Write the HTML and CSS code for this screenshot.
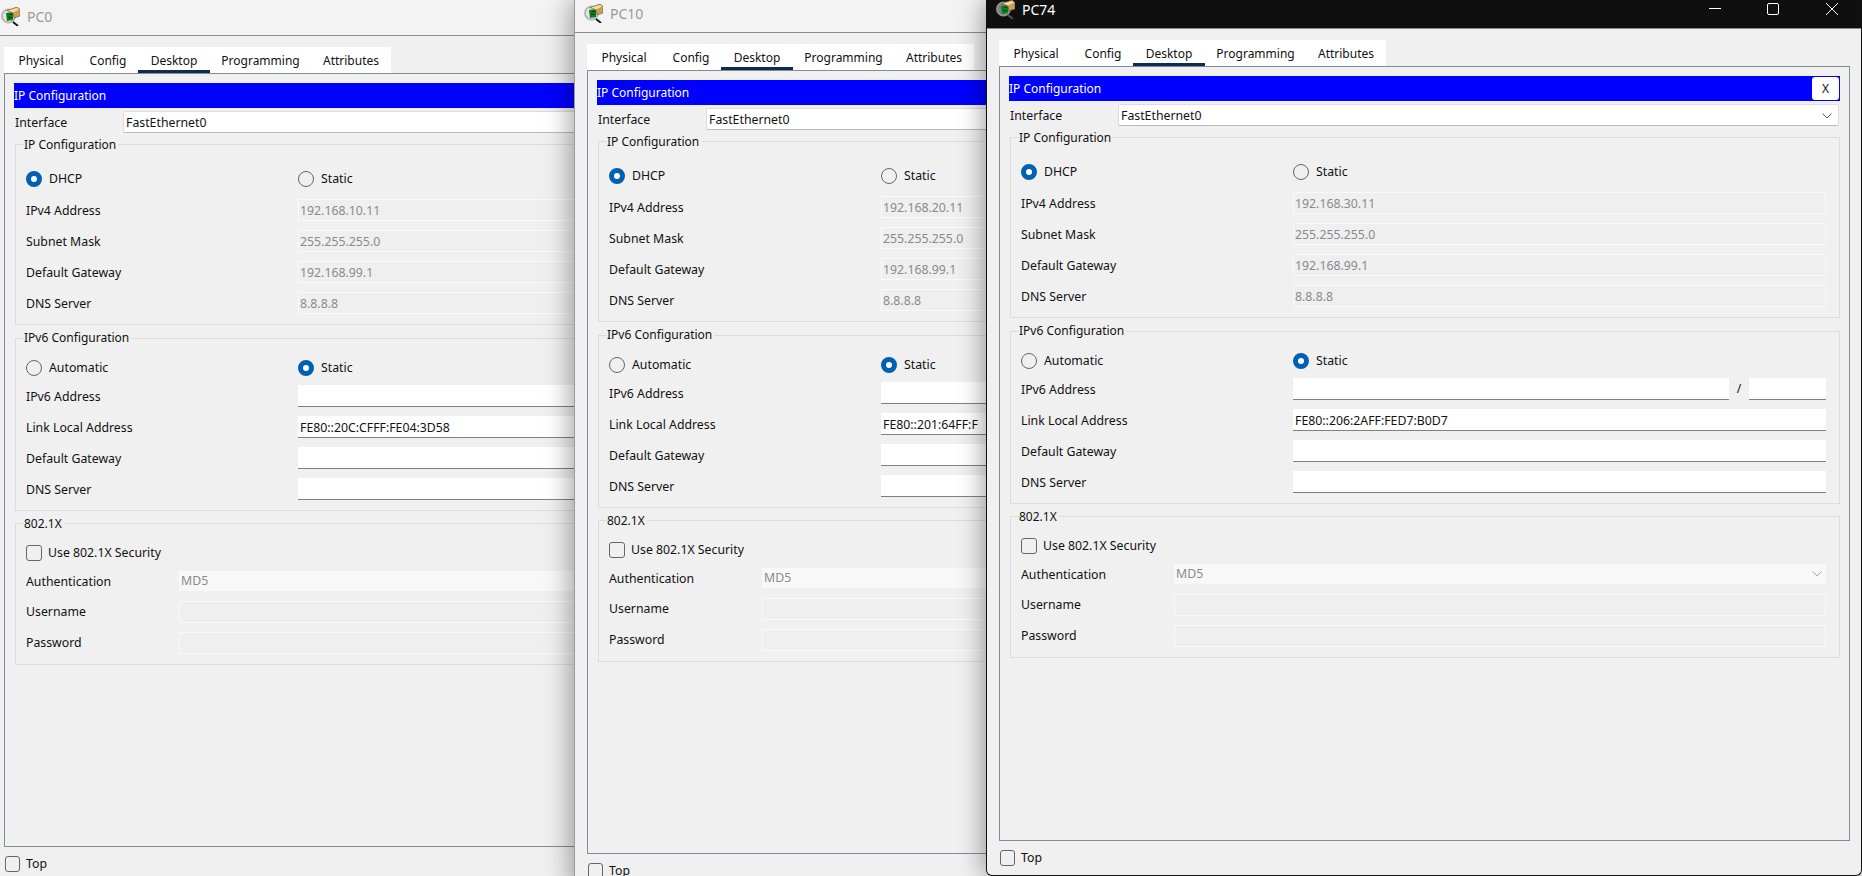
FILE: index.html
```html
<!DOCTYPE html>
<html lang="en">
<head>
  <meta charset="UTF-8">
  <title>PC74</title>
  <link rel="stylesheet" href="styles.css">
</head>
<body>

  <!-- PC0 -->
  <div class="window pc0">
    <div class="titlebar">
      <svg class="app-icon" viewBox="0 0 19 19"><circle cx="7.500" cy="9" r="6.500" fill="#e4e6e4" stroke="#b4b8b4" stroke-width="2"/><path d="M5 6l7-1v8l-6 1z" fill="#0c7d1c"/><path d="M8 7.500h3M7 10.500h4" stroke="#053f0e"/><path d="M12 15l5 4" stroke="#111" stroke-width="1.800"/><path d="M6 3.500L16 0l3 2.500V9l-6 2-1-5z" fill="#c9a052" stroke="#6b5426" stroke-width=".6"/><path d="M7 3.500L16 1l2 1.500-6 3z" fill="#f0dcab"/></svg>
      <span class="title">PC0</span>
    </div>
    <div class="tabs">
      <span class="tab">Physical</span><span class="tab">Config</span><span class="tab active">Desktop</span><span class="tab">Programming</span><span class="tab">Attributes</span>
    </div>
    <div class="panel">
      <div class="bluebar"><span>IP Configuration</span><span class="close-x">X</span></div>
      <div class="iface-row"><span class="iface-label">Interface</span><div class="select">FastEthernet0<svg class="chevron" viewBox="0 0 10 6"><path d="M.5.5L5 5 9.500.5" fill="none" stroke="#555"/></svg></div></div>

      <fieldset class="group">
        <legend>IP Configuration</legend>
        <div class="row radios first"><span class="choice"><i class="radio on"></i>DHCP</span><span class="choice"><i class="radio"></i>Static</span></div>
        <div class="row"><span>IPv4 Address</span><div class="field off">192.168.10.11</div></div>
        <div class="row"><span>Subnet Mask</span><div class="field off">255.255.255.0</div></div>
        <div class="row"><span>Default Gateway</span><div class="field off">192.168.99.1</div></div>
        <div class="row"><span>DNS Server</span><div class="field off">8.8.8.8</div></div>
      </fieldset>

      <fieldset class="group six">
        <legend>IPv6 Configuration</legend>
        <div class="row radios"><span class="choice"><i class="radio"></i>Automatic</span><span class="choice"><i class="radio on"></i>Static</span></div>
        <div class="row"><span>IPv6 Address</span><div class="addr"><div class="field"></div><span class="slash">/</span><div class="field prefix"></div></div></div>
        <div class="row"><span>Link Local Address</span><div class="field">FE80::20C:CFFF:FE04:3D58</div></div>
        <div class="row"><span>Default Gateway</span><div class="field"></div></div>
        <div class="row"><span>DNS Server</span><div class="field"></div></div>
      </fieldset>

      <fieldset class="group dot1x">
        <legend>802.1X</legend>
        <div class="check-row"><i class="check"></i>Use 802.1X Security</div>
        <div class="row wide auth"><span>Authentication</span><div class="field combo">MD5<svg class="chevron" viewBox="0 0 10 6"><path d="M.5.5L5 5 9.500.5" fill="none" stroke="#aaa"/></svg></div></div>
        <div class="row wide"><span>Username</span><div class="field off"></div></div>
        <div class="row wide"><span>Password</span><div class="field off"></div></div>
      </fieldset>
    </div>
    <div class="top-row"><i class="check"></i>Top</div>
  </div>

  <!-- PC10 -->
  <div class="window pc10">
    <div class="titlebar">
      <svg class="app-icon" viewBox="0 0 19 19"><circle cx="7.500" cy="9" r="6.500" fill="#e4e6e4" stroke="#b4b8b4" stroke-width="2"/><path d="M5 6l7-1v8l-6 1z" fill="#0c7d1c"/><path d="M8 7.500h3M7 10.500h4" stroke="#053f0e"/><path d="M12 15l5 4" stroke="#111" stroke-width="1.800"/><path d="M6 3.500L16 0l3 2.500V9l-6 2-1-5z" fill="#c9a052" stroke="#6b5426" stroke-width=".6"/><path d="M7 3.500L16 1l2 1.500-6 3z" fill="#f0dcab"/></svg>
      <span class="title">PC10</span>
    </div>
    <div class="tabs">
      <span class="tab">Physical</span><span class="tab">Config</span><span class="tab active">Desktop</span><span class="tab">Programming</span><span class="tab">Attributes</span>
    </div>
    <div class="panel">
      <div class="bluebar"><span>IP Configuration</span><span class="close-x">X</span></div>
      <div class="iface-row"><span class="iface-label">Interface</span><div class="select">FastEthernet0<svg class="chevron" viewBox="0 0 10 6"><path d="M.5.5L5 5 9.500.5" fill="none" stroke="#555"/></svg></div></div>

      <fieldset class="group">
        <legend>IP Configuration</legend>
        <div class="row radios first"><span class="choice"><i class="radio on"></i>DHCP</span><span class="choice"><i class="radio"></i>Static</span></div>
        <div class="row"><span>IPv4 Address</span><div class="field off">192.168.20.11</div></div>
        <div class="row"><span>Subnet Mask</span><div class="field off">255.255.255.0</div></div>
        <div class="row"><span>Default Gateway</span><div class="field off">192.168.99.1</div></div>
        <div class="row"><span>DNS Server</span><div class="field off">8.8.8.8</div></div>
      </fieldset>

      <fieldset class="group six">
        <legend>IPv6 Configuration</legend>
        <div class="row radios"><span class="choice"><i class="radio"></i>Automatic</span><span class="choice"><i class="radio on"></i>Static</span></div>
        <div class="row"><span>IPv6 Address</span><div class="addr"><div class="field"></div><span class="slash">/</span><div class="field prefix"></div></div></div>
        <div class="row"><span>Link Local Address</span><div class="field">FE80::201:64FF:F</div></div>
        <div class="row"><span>Default Gateway</span><div class="field"></div></div>
        <div class="row"><span>DNS Server</span><div class="field"></div></div>
      </fieldset>

      <fieldset class="group dot1x">
        <legend>802.1X</legend>
        <div class="check-row"><i class="check"></i>Use 802.1X Security</div>
        <div class="row wide auth"><span>Authentication</span><div class="field combo">MD5<svg class="chevron" viewBox="0 0 10 6"><path d="M.5.5L5 5 9.500.5" fill="none" stroke="#aaa"/></svg></div></div>
        <div class="row wide"><span>Username</span><div class="field off"></div></div>
        <div class="row wide"><span>Password</span><div class="field off"></div></div>
      </fieldset>
    </div>
    <div class="top-row"><i class="check"></i>Top</div>
  </div>

  <!-- PC74, the active window -->
  <div class="window pc74">
    <div class="titlebar">
      <svg class="app-icon" viewBox="0 0 19 19"><circle cx="7.500" cy="9" r="6.500" fill="#7c807c" stroke="#8f938f" stroke-width="2"/><path d="M5 6l7-1v8l-6 1z" fill="#0c7d1c"/><path d="M8 7.500h3M7 10.500h4" stroke="#053f0e"/><path d="M12 15l5 4" stroke="#555" stroke-width="1.800"/><path d="M6 3.500L16 0l3 2.500V9l-6 2-1-5z" fill="#c9a052" stroke="#6b5426" stroke-width=".6"/><path d="M7 3.500L16 1l2 1.500-6 3z" fill="#f0dcab"/></svg>
      <span class="title">PC74</span>
      <svg class="controls" viewBox="0 0 129 12"><path d="M0 5.500h12" stroke="#fff"/><rect x="58.500" y=".5" width="11" height="11" rx="1.500" fill="none" stroke="#fff"/><path d="M117 0l12 12M129 0l-12 12" stroke="#fff"/></svg>
    </div>
    <div class="tabs">
      <span class="tab">Physical</span><span class="tab">Config</span><span class="tab active">Desktop</span><span class="tab">Programming</span><span class="tab">Attributes</span>
    </div>
    <div class="panel">
      <div class="bluebar"><span>IP Configuration</span><span class="close-x">X</span></div>
      <div class="iface-row"><span class="iface-label">Interface</span><div class="select">FastEthernet0<svg class="chevron" viewBox="0 0 10 6"><path d="M.5.5L5 5 9.500.5" fill="none" stroke="#555"/></svg></div></div>

      <fieldset class="group">
        <legend>IP Configuration</legend>
        <div class="row radios first"><span class="choice"><i class="radio on"></i>DHCP</span><span class="choice"><i class="radio"></i>Static</span></div>
        <div class="row"><span>IPv4 Address</span><div class="field off">192.168.30.11</div></div>
        <div class="row"><span>Subnet Mask</span><div class="field off">255.255.255.0</div></div>
        <div class="row"><span>Default Gateway</span><div class="field off">192.168.99.1</div></div>
        <div class="row"><span>DNS Server</span><div class="field off">8.8.8.8</div></div>
      </fieldset>

      <fieldset class="group six">
        <legend>IPv6 Configuration</legend>
        <div class="row radios"><span class="choice"><i class="radio"></i>Automatic</span><span class="choice"><i class="radio on"></i>Static</span></div>
        <div class="row"><span>IPv6 Address</span><div class="addr"><div class="field"></div><span class="slash">/</span><div class="field prefix"></div></div></div>
        <div class="row"><span>Link Local Address</span><div class="field">FE80::206:2AFF:FED7:B0D7</div></div>
        <div class="row"><span>Default Gateway</span><div class="field"></div></div>
        <div class="row"><span>DNS Server</span><div class="field"></div></div>
      </fieldset>

      <fieldset class="group dot1x">
        <legend>802.1X</legend>
        <div class="check-row"><i class="check"></i>Use 802.1X Security</div>
        <div class="row wide auth"><span>Authentication</span><div class="field combo">MD5<svg class="chevron" viewBox="0 0 10 6"><path d="M.5.5L5 5 9.500.5" fill="none" stroke="#aaa"/></svg></div></div>
        <div class="row wide"><span>Username</span><div class="field off"></div></div>
        <div class="row wide"><span>Password</span><div class="field off"></div></div>
      </fieldset>
    </div>
    <div class="top-row"><i class="check"></i>Top</div>
  </div>

</body>
</html>
```

FILE: styles.css
```css
* {
  box-sizing: border-box;
}
html, body {
  height: 100%;
}
body {
  margin: 0;
  overflow: hidden;
  position: relative;
  background-color: #f0f0f0;
  font-family: "Noto Sans", sans-serif;
  font-size: 12.3px;
  line-height: 16px;
  color: #111;
}

/* windows sit on a free desktop */
.window {
  position: absolute;
  top: 0;
  width: 876px;
  display: flex;
  flex-direction: column;
  background-color: #f0f0f0;
  border: 1px solid #9a9a9a;
  border-top: 0;
  box-shadow: -2px 0 26px rgba(0, 0, 0, 0.4);
}
.pc0 {
  left: -9px;
  height: 882px;
}
.pc10 {
  left: 574px;
  height: 889px;
}
.pc74 {
  left: 986px;
  height: 876px;
  border-color: #111;
  border-radius: 0 0 6px 6px;
}

.titlebar {
  flex: none;
  display: flex;
  height: 29px;
  background-color: #f3f3f3;
  border-bottom: 1px solid #8c8c8c;
  color: #999;
}
.pc0 .titlebar {
  height: 36px;
  padding-top: 7px;
}
.pc10 .titlebar {
  height: 33px;
  padding-top: 4px;
}
.pc74 .titlebar {
  background-color: #0f0f0f;
  color: #fff;
}
.app-icon {
  width: 19px;
  height: 19px;
  margin-left: 9px;
}
.title {
  margin-left: 7px;
  font-size: 14px;
  line-height: 20px;
}
.controls {
  width: 129px;
  height: 12px;
  margin: 3px 23px 0 auto;
}

.tabs {
  flex: none;
  display: grid;
  grid-template-columns: 74px 60px 72px 101px 80px;
  width: 387px;
  height: 26px;
  margin: 11px 0 0 12px;
  background-color: #fff;
  font-size: 12px;
}
.tab {
  line-height: 28px;
  text-align: center;
}
.tab.active {
  box-shadow: inset 0 -5px 0 #0e2b50;
}

.panel {
  flex: 1;
  margin: 0 11px 0 12px;
  padding: 9px;
  border: 1px solid #858a94;
  background-color: #f0f0f0;
}

.bluebar {
  display: flex;
  justify-content: space-between;
  align-items: center;
  height: 25px;
  background-color: #0000ff;
  color: #fff;
  font-size: 12px;
}
.close-x {
  width: 27px;
  height: 23px;
  margin-right: 1px;
  background-color: #fff;
  border-radius: 3px;
  color: #111;
  line-height: 23px;
  text-align: center;
}

.iface-row {
  display: flex;
  align-items: center;
  height: 22px;
  margin-top: 3px;
  padding-left: 1px;
}
.iface-label {
  width: 108px;
  flex: none;
  padding-top: 2px;
}
.select {
  flex: 1;
  display: flex;
  justify-content: space-between;
  align-items: center;
  height: 22px;
  margin-right: 1px;
  padding: 2px 6px 0 2px;
  background-color: #fff;
  border: 1px solid #ddd;
  border-bottom: 1px solid #bbb;
  border-radius: 2px;
}
.chevron {
  width: 10px;
  height: 6px;
}

.group {
  margin: 3px 0 0 1px;
  min-width: 0;
  padding: 6px 13px 10px 10px;
  border: 1px solid #dcdcdc;
}
.group legend {
  position: relative;
  top: 1px;
  margin-left: -2px;
  padding: 0 2px 0 0;
  font-size: 12px;
  line-height: 16px;
}
.group.six {
  margin-top: 5px;
  padding-top: 1px;
}
.group.six legend {
  top: 0;
}
.group.dot1x {
  margin-top: 4px;
  padding-top: 0;
}

.row {
  display: grid;
  grid-template-columns: 272px 1fr;
  align-items: center;
  height: 22px;
  margin-top: 9px;
}
.row > span {
  padding-top: 2px;
}
.row.wide {
  grid-template-columns: 153px 1fr;
}
.row.wide > span {
  padding-top: 0;
}
.row.radios.first {
  margin-bottom: 10px;
}
.row.radios {
  margin-bottom: -2px;
}
.row.auth {
  margin-top: 6px;
}
.row.auth > span {
  padding-top: 2px;
}

.choice {
  display: flex;
  align-items: center;
}
.radio {
  flex: none;
  width: 16px;
  height: 16px;
  margin-right: 7px;
  border: 1px solid #666;
  border-radius: 50%;
}
.radio.on {
  border: 5px solid #0060b4;
  background-color: #fff;
}
.check {
  flex: none;
  width: 16px;
  height: 16px;
  margin-right: 6px;
  border: 1px solid #666;
  border-radius: 3px;
}
.check-row {
  display: flex;
  align-items: center;
  height: 22px;
  margin-top: 11px;
}

.field {
  height: 22px;
  padding: 0 2px;
  background-color: #fff;
  border-bottom: 1px solid #808080;
  line-height: 24px;
  white-space: nowrap;
  overflow: hidden;
}
.field.off {
  background-color: #efefef;
  border: 1px solid #f9f9f9;
  color: #8a8a8a;
  line-height: 22px;
  padding: 0 1px;
}
.field.combo {
  display: flex;
  justify-content: space-between;
  align-items: center;
  height: 20px;
  padding: 0 4px 0 2px;
  background-color: #f8f8f8;
  border: 0;
  color: #8a8a8a;
}
.addr {
  display: flex;
  align-items: center;
}
.addr .field:first-child {
  flex: 1;
}
.slash {
  width: 20px;
  text-align: center;
}
.prefix {
  flex: none;
  width: 77px;
}

.top-row {
  flex: none;
  display: flex;
  align-items: center;
  height: 22px;
  margin: 6px 0 6px 13px;
}
.top-row .check {
  width: 15px;
}
```
